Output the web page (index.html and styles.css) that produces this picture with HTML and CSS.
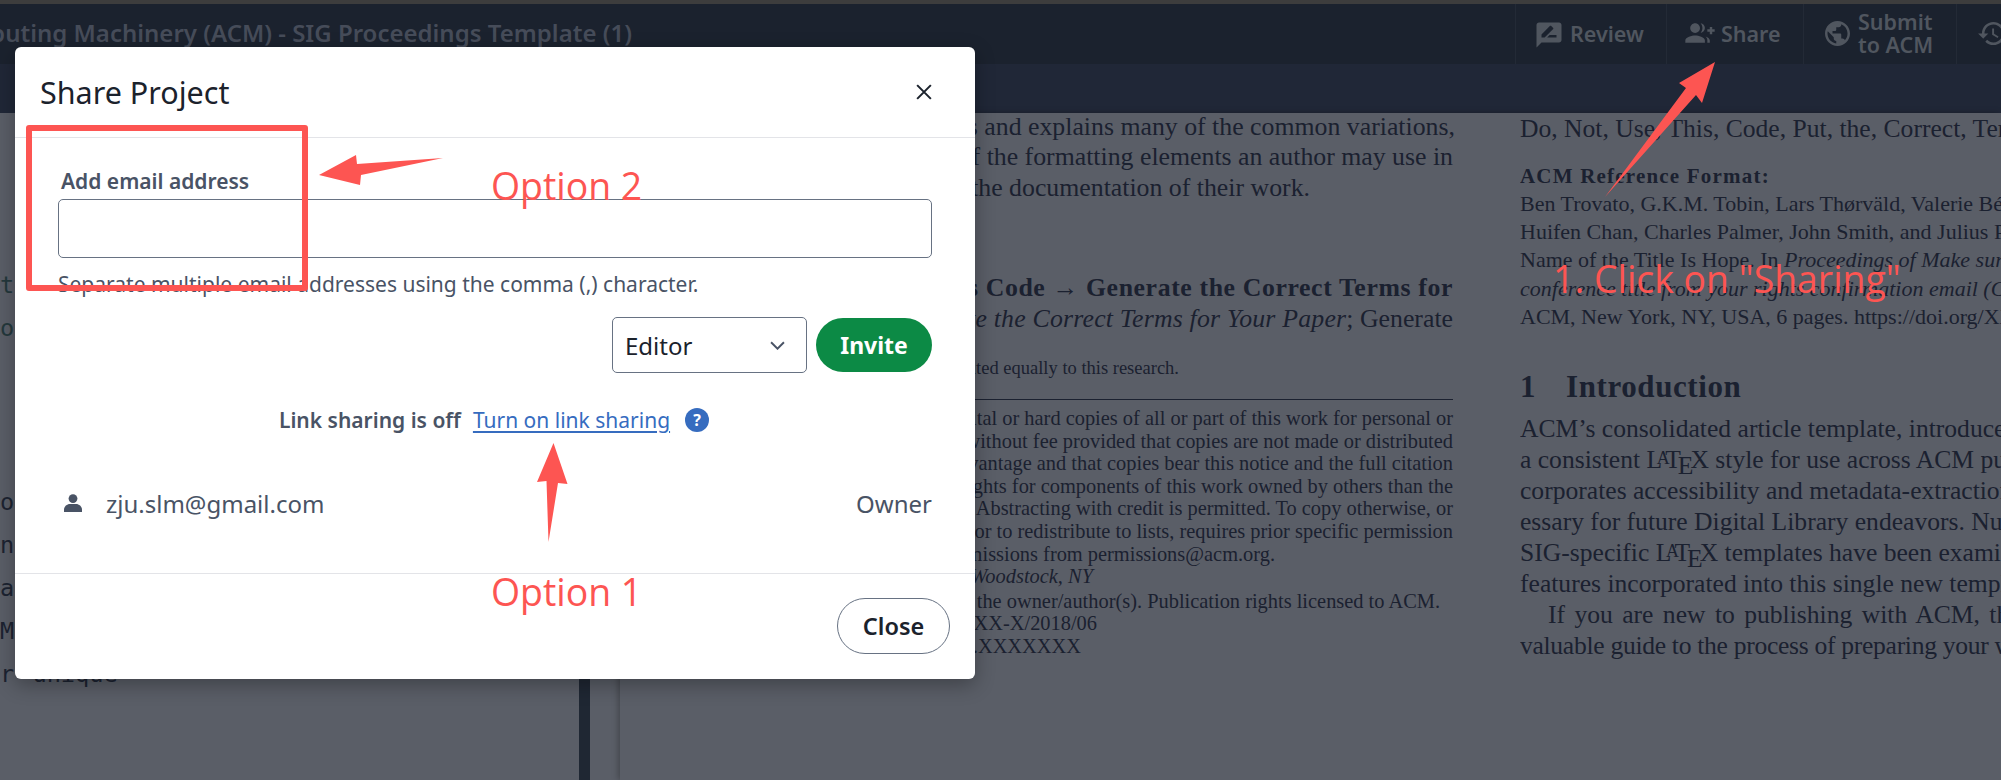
FILE: index.html
```html
<!DOCTYPE html>
<html lang="en">
<head>
  <meta charset="UTF-8">
  <title>Share Project</title>
  <link rel="stylesheet" href="styles.css">
</head>
<body>

  <div class="top-strip"></div>

  <header class="toolbar">
    <div class="doc-title"><span>Association for Computing Machinery (ACM) - SIG Proceedings Template (1)</span></div>
    <nav class="tool-buttons">
      <div class="tool tool-review">
        <svg viewBox="0 0 24 24"><path d="M20 2H4c-1.1 0-2 .9-2 2v18l4-4h14c1.1 0 2-.9 2-2V4c0-1.1-.9-2-2-2zM6 14v-2.47l6.88-6.88c.2-.2.51-.2.71 0l1.77 1.77c.2.2.2.51 0 .71L8.47 14H6zm12 0h-7.5l2-2H18v2z"/></svg>
        <span>Review</span>
      </div>
      <div class="tool tool-share">
        <svg viewBox="0 0 24 18"><path d="M22 6V4h-2v2h-2v2h2v2h2V8h2V6h-2zM8 9c2.21 0 4-1.79 4-4S10.21 1 8 1 4 2.79 4 5s1.79 4 4 4zm0 2c-2.67 0-8 1.34-8 4v2h16v-2c0-2.66-5.33-4-8-4zM12.51 1.05C13.43 2.11 14 3.49 14 5s-.57 2.89-1.49 3.95C14.47 8.7 16 7.04 16 5s-1.53-3.7-3.49-3.95zM16.53 11.83C17.42 12.66 18 13.7 18 15v2h2v-2c0-1.45-1.59-2.51-3.47-3.17z"/></svg>
        <span>Share</span>
      </div>
      <div class="tool tool-submit">
        <svg viewBox="2 2 20 20"><path d="M12 2C6.48 2 2 6.48 2 12s4.48 10 10 10 10-4.48 10-10S17.52 2 12 2zm-1 17.93c-3.95-.49-7-3.85-7-7.93 0-.62.08-1.21.21-1.79L9 15v1c0 1.1.9 2 2 2v1.93zm6.9-2.54c-.26-.81-1-1.39-1.9-1.39h-1v-3c0-.55-.45-1-1-1H8v-2h2c.55 0 1-.45 1-1V7h2c1.1 0 2-.9 2-2v-.41c2.93 1.19 5 4.06 5 7.41 0 2.08-.8 3.97-2.1 5.39z"/></svg>
        <span>Submit<br>to ACM</span>
      </div>
      <div class="tool tool-history">
        <svg viewBox="1 3 21 18"><path d="M13 3c-4.97 0-9 4.03-9 9H1l3.89 3.89.07.14L9 12H6c0-3.87 3.13-7 7-7s7 3.13 7 7-3.13 7-7 7c-1.93 0-3.68-.79-4.94-2.06l-1.42 1.42C8.27 19.99 10.51 21 13 21c4.97 0 9-4.03 9-9s-4.03-9-9-9zm-1 5v5l4.28 2.54.72-1.21-3.5-2.08V8H12z"/></svg>
      </div>
    </nav>
  </header>

  <div class="sub-bar"></div>

  <main class="workspace">
    <section class="code-pane">
      <div class="code-line code-green">t</div>
      <div class="code-line code-green">o</div>
      <div class="code-line code-gap-l">o</div>
      <div class="code-line">n</div>
      <div class="code-line">a</div>
      <div class="code-line">M</div>
      <div class="code-line">r <span class="code-tail">unique</span></div>
    </section>
    <div class="gutter"></div>

    <section class="pdf-pane">
      <div class="pdf-col pdf-left">
        <div class="ln ln-first">This article documents and explains many of the common variations,</div>
        <div class="ln">as well as many of the formatting elements an author may use in</div>
        <div class="ln end-work">the preparation of the documentation of their work.</div>
        <div class="ln ln-bold">Do Not Use This Code → Generate the Correct Terms for</div>
        <div class="ln">Your Paper; <em>Generate the Correct Terms for Your Paper</em>; Generate</div>
        <div class="ln ln-note">Both authors contributed equally to this research.</div>
        <div class="fine-rule"></div>
        <div class="fine">Permission to make digital or hard copies of all or part of this work for personal or</div>
        <div class="fine">classroom use is granted without fee provided that copies are not made or distributed</div>
        <div class="fine">for profit or commercial advantage and that copies bear this notice and the full citation</div>
        <div class="fine">on the first page. Copyrights for components of this work owned by others than the</div>
        <div class="fine">author(s) must be honored. Abstracting with credit is permitted. To copy otherwise, or</div>
        <div class="fine">republish, to post on servers or to redistribute to lists, requires prior specific permission</div>
        <div class="fine end-perm">and/or a fee. Request permissions from permissions@acm.org.</div>
        <div class="fine end-conf"><em>Conference, July 2018, Woodstock, NY</em></div>
        <div class="fine fine-own end-own">© 2018 Copyright held by the owner/author(s). Publication rights licensed to ACM.</div>
        <div class="fine end-isbn">ACM ISBN XXX-X-XXXX-XXXX-X/2018/06</div>
        <div class="fine end-doi">https://doi.org/XXXXXXX.XXXXXXX</div>
      </div>

      <div class="pdf-col pdf-right">
        <div class="ln">Do, Not, Use, This, Code, Put, the, Correct, Terms, for, Your, Paper</div>
        <div class="ref-title">ACM Reference Format:</div>
        <div class="ref">Ben Trovato, G.K.M. Tobin, Lars Thørväld, Valerie Béranger, Aparna Patel,</div>
        <div class="ref">Huifen Chan, Charles Palmer, John Smith, and Julius P. Kumquat. 2018. The</div>
        <div class="ref">Name of the Title Is Hope. In <em>Proceedings of Make sure to enter the correct</em></div>
        <div class="ref"><em>conference title from your rights confirmation email (Conference)</em></div>
        <div class="ref">ACM, New York, NY, USA, 6 pages. https://doi.org/XXXXXXX.XXXXXXX</div>
        <h2 class="sec-title"><span class="sec-num">1</span>Introduction</h2>
        <div class="ln">ACM’s consolidated article template, introduced in 2017, provides</div>
        <div class="ln">a consistent <span class="latex">L<sup>A</sup>T<sub>E</sub>X</span> style for use across ACM publications, and in-</div>
        <div class="ln">corporates accessibility and metadata-extraction functionality nec-</div>
        <div class="ln">essary for future Digital Library endeavors. Numerous ACM and</div>
        <div class="ln">SIG-specific <span class="latex">L<sup>A</sup>T<sub>E</sub>X</span> templates have been examined, and their unique</div>
        <div class="ln">features incorporated into this single new template.</div>
        <div class="ln ln-indent">If you are new to publishing with ACM, this document is a</div>
        <div class="ln ln-tight">valuable guide to the process of preparing your work for publication.</div>
      </div>
    </section>
  </main>

  <div class="modal">
    <div class="modal-header">
      <h1>Share Project</h1>
      <svg class="close-x" viewBox="0 0 14 14"><path d="M1 1l12 12M13 1L1 13"/></svg>
    </div>

    <div class="modal-body">
      <label class="email-label" for="email">Add email address</label>
      <input class="email-input" id="email" type="text">
      <p class="email-help">Separate multiple email addresses using the comma (,) character.</p>

      <div class="invite-row">
        <div class="role-select">
          <span>Editor</span>
          <svg viewBox="0 0 14 8"><path d="M1 1l6 6 6-6"/></svg>
        </div>
        <button class="invite-btn">Invite</button>
      </div>

      <div class="link-row">
        <strong>Link sharing is off</strong>
        <a href="#">Turn on link sharing</a>
        <span class="help-dot">?</span>
      </div>

      <div class="member-row">
        <svg class="member-icon" viewBox="0 0 18 18"><circle cx="9" cy="4.6" r="4.4"/><path d="M0 18v-2.2C0 12.3 3 10 6 10h6c3 0 6 2.300 6 5.800V18z"/></svg>
        <span class="member-email">zju.slm@gmail.com</span>
        <span class="member-role">Owner</span>
      </div>
    </div>

    <div class="modal-footer">
      <button class="close-btn">Close</button>
    </div>
  </div>

  <!-- red markup drawn on top of the screenshot -->
  <div class="mark-box"></div>
  <svg class="mark-arrows" viewBox="0 0 2001 780">
    <polygon points="1715,62 1702,103 1696,95 1605,197 1686,88 1679,83"/>
    <polygon points="319,175 356,155 357,164 443,158 361,175 360,185"/>
    <polygon points="553.500,443 567.500,484 558,483 548.500,542 546.500,481 537,482"/>
  </svg>
  <div class="mark-text mark-opt2">Option 2</div>
  <div class="mark-text mark-opt1">Option 1</div>
  <div class="mark-text mark-click">1. Click on "Sharing"</div>

</body>
</html>
```

FILE: styles.css
```css
html, body {
  margin: 0;
  padding: 0;
}

body {
  position: relative;
  width: 2001px;
  height: 780px;
  overflow: hidden;
  background-color: #5a5e67;
  font-family: "Noto Sans", sans-serif;
}

.top-strip {
  height: 4px;
  background-color: #3d3d3d;
}

/* Toolbar */
.toolbar {
  display: flex;
  height: 60px;
  background-color: #1b222e;
}

.doc-title {
  display: flex;
  justify-content: flex-end;
  align-items: center;
  flex: none;
  width: 632px;
  padding-bottom: 3px;
  overflow: hidden;
  white-space: nowrap;
  font-size: 24px;
  font-weight: 600;
  color: #464c59;
}

.tool-buttons {
  display: flex;
  margin-left: 883px;
}

.tool {
  display: flex;
  align-items: center;
  box-sizing: border-box;
  padding-bottom: 2px;
  border-left: 1px solid #232a36;
  font-size: 21.500px;
  font-weight: 600;
  color: #50565f;
}

.tool svg {
  fill: #50565f;
  flex: none;
}

.tool-review {
  width: 151px;
  padding-left: 21px;
  gap: 6px;
}

.tool-review svg {
  width: 30px;
  height: 30px;
  margin-left: -3px;
  margin-top: 4px;
}

.tool-share {
  width: 137px;
  padding-left: 18px;
  gap: 6px;
}

.tool-share svg {
  width: 30px;
  height: 22px;
}

.tool-submit {
  width: 153px;
  padding-left: 21px;
  gap: 8px;
  line-height: 23px;
}

.tool-submit svg {
  width: 25px;
  height: 25px;
}

.tool-history {
  width: 45px;
  padding-left: 21px;
}

.tool-history svg {
  width: 27px;
  height: 23px;
}

.sub-bar {
  height: 49px;
  background-color: #202737;
}

/* Main panes */
.workspace {
  display: flex;
  height: 667px;
}

.code-pane {
  flex: none;
  width: 579px;
  padding-top: 151px;
  overflow: hidden;
  font-family: "DejaVu Sans Mono", monospace;
  font-size: 23.600px;
  color: #1c2331;
}

.code-line {
  height: 43px;
  line-height: 43px;
  white-space: pre;
}

.code-green {
  color: #24383c;
}

.code-gap-l {
  margin-top: 131px;
}

.code-tail {
  margin-left: 4px;
}

.gutter {
  flex: none;
  width: 11px;
  background-color: #1f2733;
}

.pdf-pane {
  position: relative;
  display: flex;
  flex: 1;
  margin-left: 30px;
  min-width: 0;
  overflow: hidden;
  box-shadow: -2px 0 6px rgba(0, 0, 0, 0.25);
  font-family: "Liberation Serif", serif;
  color: #1b2130;
}

.pdf-col {
  flex: none;
  white-space: nowrap;
}

.pdf-left {
  width: 833px;
  margin-top: -1.500px;
  text-align: right;
}

.pdf-right {
  width: 481px;
  margin-left: 67px;
  overflow: hidden;
}

.ln {
  height: 31px;
  line-height: 31px;
  font-size: 25.600px;
}

.pdf-left .ln {
  height: 30.500px;
  line-height: 30.500px;
  font-size: 25.800px;
}

.pdf-left .ln em {
  letter-spacing: 0.2px;
}

.pdf-left .ln-first {
  margin-right: -2px;
}

.pdf-left .ln:nth-child(4) {
  margin-top: 70px;
}

.ln-bold {
  font-weight: bold;
  letter-spacing: 0.6px;
}

.pdf-left .ln-note {
  margin-top: 21px;
  padding-right: 274px;
  height: 26px;
  line-height: 26px;
  font-size: 18.500px;
}

.end-work {
  padding-right: 143px;
}

.end-perm {
  padding-right: 178px;
}

.end-conf {
  padding-right: 360px;
}

.end-own {
  padding-right: 13px;
}

.end-isbn {
  padding-right: 356px;
}

.end-doi {
  padding-right: 372px;
}

.fine-rule {
  height: 1px;
  margin: 18px 0 7px;
  background-color: #1b2130;
}

.fine {
  height: 22.600px;
  line-height: 22.600px;
  font-size: 20.400px;
}

.fine-own {
  margin-top: 2px;
}

.ref-title {
  margin-top: 18px;
  height: 28px;
  line-height: 28px;
  font-size: 21px;
  font-weight: bold;
  letter-spacing: 1.200px;
}

.ref {
  height: 28.200px;
  line-height: 28.200px;
  font-size: 22px;
}

.sec-title {
  margin: 40px 0 10px;
  height: 32px;
  line-height: 32px;
  font-size: 31px;
  font-weight: bold;
  letter-spacing: 0.6px;
}

.sec-num {
  display: inline-block;
  width: 46px;
}

.ln-indent {
  padding-left: 28px;
  word-spacing: 3px;
}

.ln-tight {
  letter-spacing: -0.3px;
}

.latex sup {
  font-size: 0.7em;
  vertical-align: 0.2em;
  line-height: 0;
  margin: 0 -0.25em 0 -0.3em;
}

.latex sub {
  font-size: 1em;
  vertical-align: -0.22em;
  line-height: 0;
  margin: 0 -0.12em;
}

/* Share dialog */
.modal {
  position: absolute;
  left: 15px;
  top: 47px;
  width: 960px;
  height: 632px;
  display: flex;
  flex-direction: column;
  background-color: #fff;
  border-radius: 6px;
  box-shadow: 0 6px 20px rgba(0, 0, 0, 0.3);
}

.modal-header {
  display: flex;
  align-items: center;
  justify-content: space-between;
  box-sizing: border-box;
  height: 91px;
  padding: 0 43px 0 25px;
  border-bottom: 1px solid #e3e4e8;
}

.modal-header h1 {
  margin: 0;
  font-size: 30.500px;
  font-weight: 400;
  color: #1b222c;
}

.close-x {
  width: 16px;
  height: 16px;
  fill: none;
  stroke: #1b222c;
  stroke-width: 1.800;
}

.modal-body {
  flex: 1;
  padding: 29px 43px 0 43px;
}

.email-label {
  display: block;
  height: 28px;
  line-height: 28px;
  margin-left: 3px;
  font-size: 21px;
  font-weight: 600;
  color: #495365;
}

.email-input {
  display: block;
  box-sizing: border-box;
  width: 100%;
  height: 59px;
  margin-top: 4px;
  border: 1px solid #677283;
  border-radius: 5px;
}

.email-help {
  margin: 12px 0 0;
  line-height: 28px;
  font-size: 21px;
  color: #495365;
}

.invite-row {
  display: flex;
  justify-content: flex-end;
  align-items: center;
  gap: 9px;
  margin-top: 19px;
}

.role-select {
  display: flex;
  align-items: center;
  justify-content: space-between;
  box-sizing: border-box;
  width: 195px;
  height: 56px;
  padding: 0 21px 0 12px;
  border: 1px solid #677283;
  border-radius: 5px;
  font-size: 24px;
  color: #1b222c;
}

.role-select svg {
  width: 15px;
  height: 9px;
  fill: none;
  stroke: #495365;
  stroke-width: 1.800;
}

.invite-btn {
  width: 116px;
  height: 54px;
  border: none;
  border-radius: 27px;
  background-color: #0c8a45;
  color: #fff;
  font-family: inherit;
  font-size: 23px;
  font-weight: 700;
}

.link-row {
  display: flex;
  align-items: center;
  justify-content: center;
  height: 28px;
  margin-top: 33px;
  padding-right: 2px;
  font-size: 21px;
  color: #495365;
}

.link-row strong {
  font-weight: 600;
}

.link-row a {
  margin-left: 12px;
  color: #366cbf;
  text-decoration: underline;
  text-underline-offset: 3px;
}

.help-dot {
  display: flex;
  align-items: center;
  justify-content: center;
  width: 24px;
  height: 24px;
  margin-left: 15px;
  border-radius: 50%;
  background-color: #366cbf;
  color: #fff;
  font-size: 16px;
  font-weight: 700;
}

.member-row {
  display: flex;
  align-items: center;
  height: 30px;
  margin-top: 54px;
  font-size: 24px;
  color: #495365;
}

.member-icon {
  flex: none;
  width: 18px;
  height: 18px;
  margin-left: 6px;
  fill: #495365;
}

.member-email {
  margin-left: 24px;
}

.member-role {
  margin-left: auto;
}

.modal-footer {
  display: flex;
  justify-content: flex-end;
  align-items: center;
  box-sizing: border-box;
  height: 106px;
  padding: 0 25px 2px 0;
  border-top: 1px solid #e3e4e8;
}

.close-btn {
  width: 113px;
  height: 56px;
  border: 1px solid #677283;
  border-radius: 28px;
  background-color: #fff;
  color: #1b222c;
  font-family: inherit;
  font-size: 23.500px;
  font-weight: 600;
}

/* Red annotations over the screenshot */
.mark-box {
  position: absolute;
  left: 26px;
  top: 125px;
  width: 282px;
  height: 166px;
  box-sizing: border-box;
  border: 6px solid #fd5552;
  border-radius: 3px;
}

.mark-arrows {
  position: absolute;
  left: 0;
  top: 0;
  width: 2001px;
  height: 780px;
  fill: #fd5552;
  pointer-events: none;
}

.mark-text {
  position: absolute;
  white-space: nowrap;
  font-family: "Open Sans", sans-serif;
  font-size: 37.400px;
  line-height: 52px;
  color: #fd5552;
}

.mark-opt2 {
  left: 491px;
  top: 160px;
}

.mark-opt1 {
  left: 491px;
  top: 566px;
}

.mark-click {
  left: 1553px;
  top: 253px;
}
```
